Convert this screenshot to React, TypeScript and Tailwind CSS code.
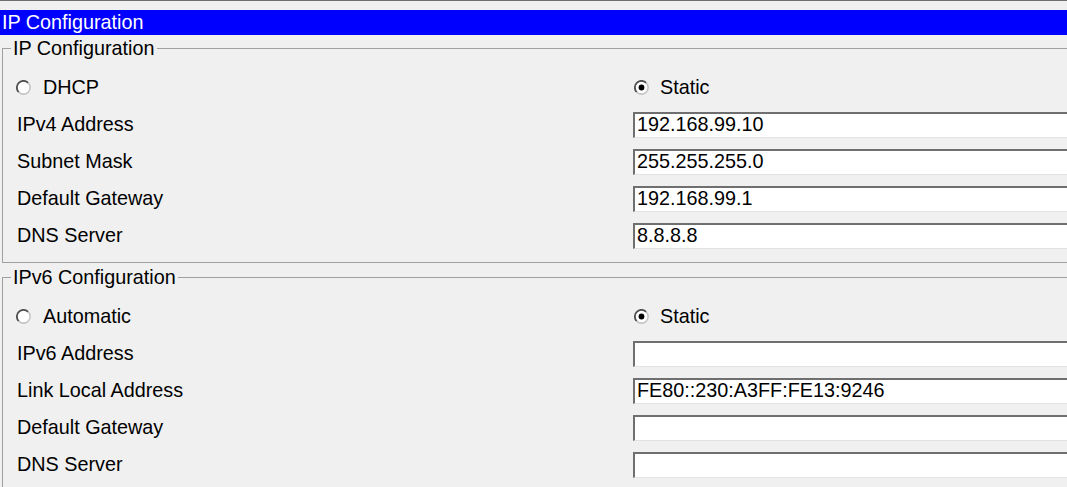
import React from "react";

const FONT = { fontFamily: '"Liberation Sans", Arial, sans-serif' };

type Row = { label: string; value?: string };

function Radio({ checked }: { checked?: boolean }) {
  return (
    <svg width="15" height="15" viewBox="0 0 15 15" className="shrink-0">
      <circle cx="7.5" cy="7.5" r="6.6" fill="#ffffff" />
      {/* dark upper-left arc, light lower-right arc */}
      <path d="M12.2 2.8 A6.6 6.6 0 0 0 2.8 12.2" fill="none" stroke="#4f4f4f" strokeWidth="1.8" />
      <path d="M2.8 12.2 A6.6 6.6 0 0 0 12.2 2.8" fill="none" stroke="#c4c4c4" strokeWidth="1.6" />
      {checked && <circle cx="7.5" cy="7.5" r="2.9" fill="#000000" />}
    </svg>
  );
}

function Field({ value }: { value?: string }) {
  return (
    <div className="h-[26px] flex-1 bg-white border-t-2 border-l-2 border-t-[#6f6f6f] border-l-[#6f6f6f] border-b border-b-[#e3e3e3] flex items-center pl-[2px] text-black leading-none">
      {value}
    </div>
  );
}

function Group({
  title,
  auto,
  rows,
}: {
  title: string;
  auto: string;
  rows: Row[];
}) {
  return (
    <fieldset className="ml-[2px] w-[1090px] border border-[#a0a0a0] pl-[8px] pt-[10px] pb-[8px]">
      <legend className="px-[2px] leading-[22px]">{title}</legend>
      <div className="flex h-[37px] items-center">
        <div className="w-[622px] flex items-center pl-[5px] gap-[12px]">
          <Radio />
          <span>{auto}</span>
        </div>
        <div className="flex items-center pl-[1px] gap-[11px]">
          <Radio checked />
          <span>Static</span>
        </div>
      </div>
      {rows.map((r, i) => (
        <div key={i} className="flex h-[37px] items-center">
          <div className="w-[622px] pl-[6px]">{r.label}</div>
          <Field value={r.value} />
        </div>
      ))}
    </fieldset>
  );
}

export default function App() {
  return (
    <div
      className="w-[1067px] h-[487px] overflow-hidden bg-[#f0f0f0] border-t border-[#6e6e6e] text-[19.8px] text-black"
      style={FONT}
    >
      <div className="mt-[9px] h-[25px] bg-[#0000ff] text-white pl-[2px] leading-[24px]">
        IP Configuration
      </div>
      <div className="mt-[2px]">
        <Group
          title="IP Configuration"
          auto="DHCP"
          rows={[
            { label: "IPv4 Address", value: "192.168.99.10" },
            { label: "Subnet Mask", value: "255.255.255.0" },
            { label: "Default Gateway", value: "192.168.99.1" },
            { label: "DNS Server", value: "8.8.8.8" },
          ]}
        />
      </div>
      <div className="mt-[3px]">
        <Group
          title="IPv6 Configuration"
          auto="Automatic"
          rows={[
            { label: "IPv6 Address" },
            { label: "Link Local Address", value: "FE80::230:A3FF:FE13:9246" },
            { label: "Default Gateway" },
            { label: "DNS Server" },
          ]}
        />
      </div>
    </div>
  );
}
